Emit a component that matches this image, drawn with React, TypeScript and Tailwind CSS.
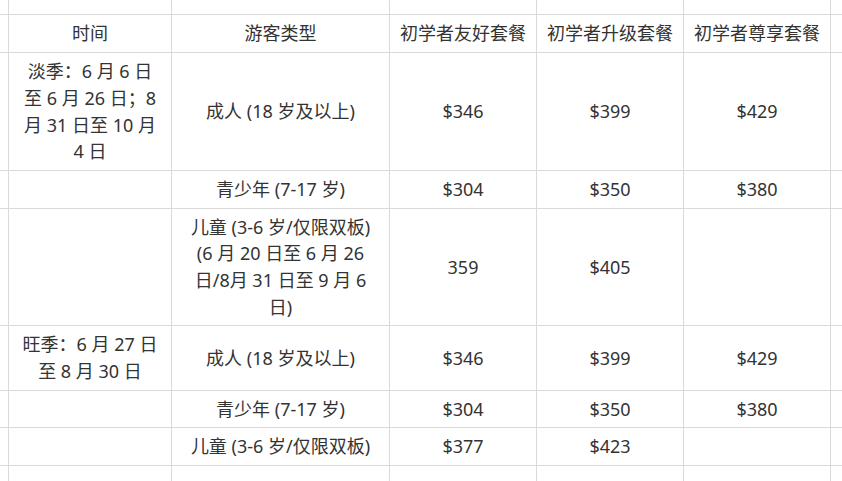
import React from "react"

// each row: [edge, 时间, 游客类型, 友好, 升级, 尊享, edge]
// "\n" marks a forced line break, matching the sheet's wrapping
const rows: string[][] = [
  ["", "", "", "", "", "", ""],
  ["", "时间", "游客类型", "初学者友好套餐", "初学者升级套餐", "初学者尊享套餐", ""],
  [
    "",
    "淡季：6 月 6 日\n至 6 月 26 日；8\n月 31 日至 10 月\n4 日",
    "成人 (18 岁及以上)",
    "$346",
    "$399",
    "$429",
    "",
  ],
  ["", "", "青少年 (7-17 岁)", "$304", "$350", "$380", ""],
  [
    "",
    "",
    "儿童 (3-6 岁/仅限双板)\n(6 月 20 日至 6 月 26\n日/8月 31 日至 9 月 6\n日)",
    "359",
    "$405",
    "",
    "",
  ],
  ["", "旺季：6 月 27 日\n至 8 月 30 日", "成人 (18 岁及以上)", "$346", "$399", "$429", ""],
  ["", "", "青少年 (7-17 岁)", "$304", "$350", "$380", ""],
  ["", "", "儿童 (3-6 岁/仅限双板)", "$377", "$423", "", ""],
  ["", "", "", "", "", "", ""],
]

function Cell({ text }: { text: string }) {
  const lines = text ? text.split("\n") : []
  return (
    <div className="flex flex-col items-center justify-center overflow-hidden bg-white text-center">
      {lines.map((line, i) => (
        <span key={i} className="block whitespace-nowrap">
          {line}
        </span>
      ))}
    </div>
  )
}

export default function App() {
  return (
    <main
      className="h-[481px] w-full overflow-hidden bg-white text-[18px] leading-[26.67px] text-[#333333]"
      style={{ fontFamily: '"Noto Sans", "Noto Sans CJK SC", sans-serif' }}
    >
      <div className="grid h-full w-full grid-cols-[8px_162px_217px_146px_146px_146px_1fr] grid-rows-[14px_37px_117px_37px_116px_64px_36px_37px_1fr] gap-px bg-[#dadada]">
        {rows.map((row, r) => row.map((text, c) => <Cell key={`${r}-${c}`} text={text} />))}
      </div>
    </main>
  )
}
